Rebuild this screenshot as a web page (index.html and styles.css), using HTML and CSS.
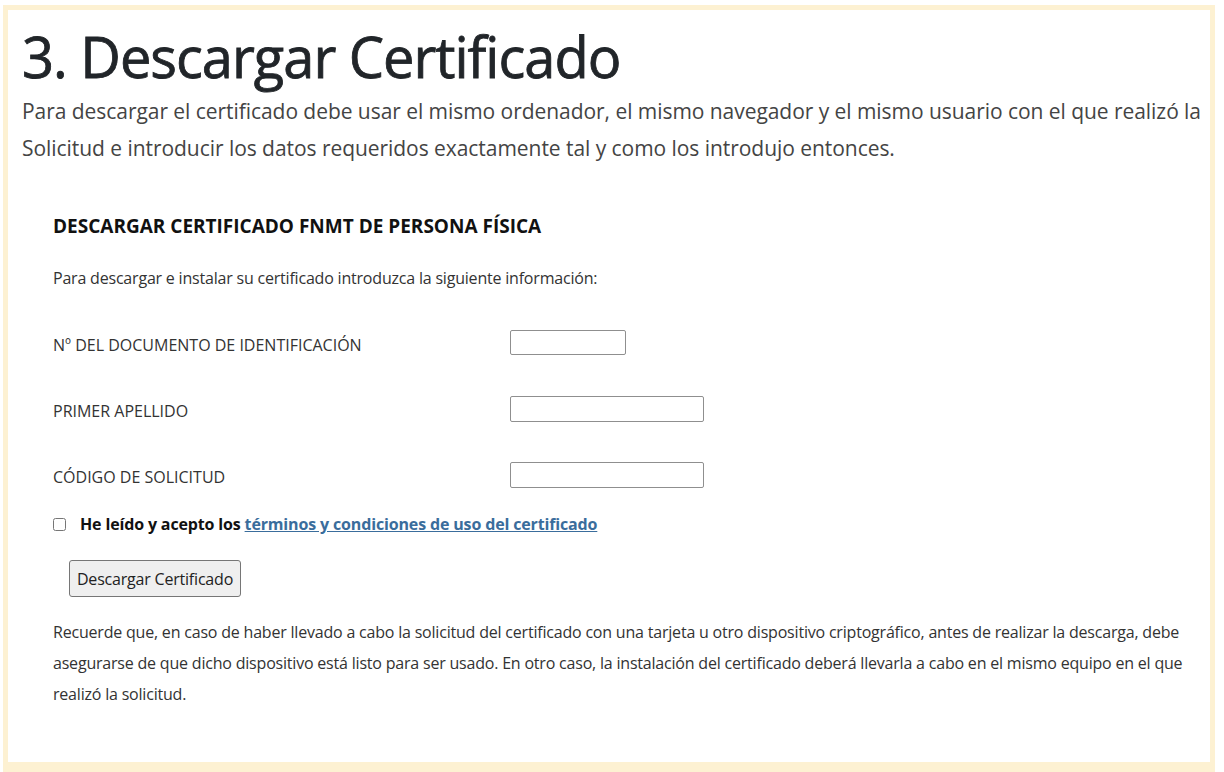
FILE: index.html
```html
<!DOCTYPE html>
<html lang="es">
<head>
<meta charset="utf-8">
<title>3. Descargar Certificado</title>
<link rel="stylesheet" href="styles.css">
</head>
<body>
<div class="frame">
  <h1 class="title">3. Descargar Certificado</h1>
  <p class="lead">Para descargar el certificado debe usar el mismo ordenador, el mismo navegador y el mismo usuario con el que realizó la Solicitud e introducir los datos requeridos exactamente tal y como los introdujo entonces.</p>
  <section class="panel">
    <h2 class="panel-title">DESCARGAR CERTIFICADO FNMT DE PERSONA FÍSICA</h2>
    <p class="intro">Para descargar e instalar su certificado introduzca la siguiente información:</p>
    <div class="form">
      <label class="lbl" for="doc">Nº DEL DOCUMENTO DE IDENTIFICACIÓN</label>
      <input class="field short" id="doc" type="text">
      <label class="lbl" for="ape">PRIMER APELLIDO</label>
      <input class="field" id="ape" type="text">
      <label class="lbl" for="cod">CÓDIGO DE SOLICITUD</label>
      <input class="field" id="cod" type="text">
    </div>
    <div class="check-row">
      <input class="check" type="checkbox" id="acepto">
      <label class="check-label" for="acepto">He leído y acepto los <a href="#" class="link">términos y condiciones de uso del certificado</a></label>
    </div>
    <button class="btn" type="button">Descargar Certificado</button>
    <p class="note">Recuerde que, en caso de haber llevado a cabo la solicitud del certificado con una tarjeta u otro dispositivo criptográfico, antes de realizar la descarga, debe asegurarse de que dicho dispositivo está listo para ser usado. En otro caso, la instalación del certificado deberá llevarla a cabo en el mismo equipo en el que realizó la solicitud.</p>
  </section>
</div>
</body>
</html>
```
FILE: styles.css
```css
html, body {
  margin: 0;
  padding: 0;
  background: #ffffff;
}
body {
  font-family: "Open Sans", "Noto Sans", sans-serif;
  color: #212529;
  overflow: hidden;
  height: 772px;
}
.frame {
  margin: 5px 0 0 3px;
  width: 1188px;
  height: 752px;
  border: 5px solid #fdf1d2;
  border-bottom-width: 20px;
  padding: 0 0 0 14px;
  box-sizing: content-box;
}
.title {
  margin: 0;
  padding-top: 13px;
  font-size: 56px;
  font-weight: 400;
  line-height: 66px;
  letter-spacing: -1px;
  color: #212529;
  -webkit-text-stroke: 0.8px #212529;
}
.lead {
  margin: 4px 0 0 0;
  font-size: 21px;
  line-height: 37px;
  font-weight: 400;
  color: #444;
  letter-spacing: -0.05px;
}
.panel {
  padding: 46px 0 0 31px;
}
.panel-title {
  margin: 0;
  font-size: 19px;
  font-weight: 700;
  line-height: 26px;
  letter-spacing: 0;
  color: #111;
}
.intro {
  margin: 28px 0 0 0;
  font-size: 16px;
  line-height: 22px;
  letter-spacing: -0.2px;
  color: #333;
}
.form {
  margin-top: 41px;
  display: grid;
  grid-template-columns: 457px auto;
  grid-auto-rows: 26px;
  row-gap: 40px;
  align-items: center;
  justify-items: start;
}
.lbl {
  font-size: 16px;
  letter-spacing: 0;
  color: #333;
  line-height: 22px;
  margin-top: 3px;
}
.field {
  width: 194px;
  height: 26px;
  box-sizing: border-box;
  border: 1px solid #8f8f8f;
  border-radius: 2px;
  padding: 0 4px;
  margin: 0;
  font: inherit;
  align-self: start;
}
.field.short {
  width: 116px;
  height: 25px;
}
.check-row {
  display: flex;
  align-items: center;
  margin-top: 25px;
  height: 22px;
}
.check {
  width: 13px;
  height: 13px;
  margin: 0 14px 0 0;
}
.check-label {
  font-size: 16px;
  font-weight: 700;
  letter-spacing: -0.15px;
  color: #111;
  line-height: 22px;
}
.link {
  color: #3a6d9c;
  text-decoration: underline;
}
.btn {
  display: block;
  margin: 25px 0 0 16px;
  width: 172px;
  height: 37px;
  padding: 0;
  background: #efefef;
  border: 1px solid #767676;
  border-radius: 3px;
  font-family: inherit;
  font-size: 16px;
  letter-spacing: -0.2px;
  color: #222;
}
.note {
  margin: 20px 0 0 0;
  padding-right: 8px;
  font-size: 16px;
  line-height: 31px;
  letter-spacing: -0.2px;
  color: #333;
}
```
